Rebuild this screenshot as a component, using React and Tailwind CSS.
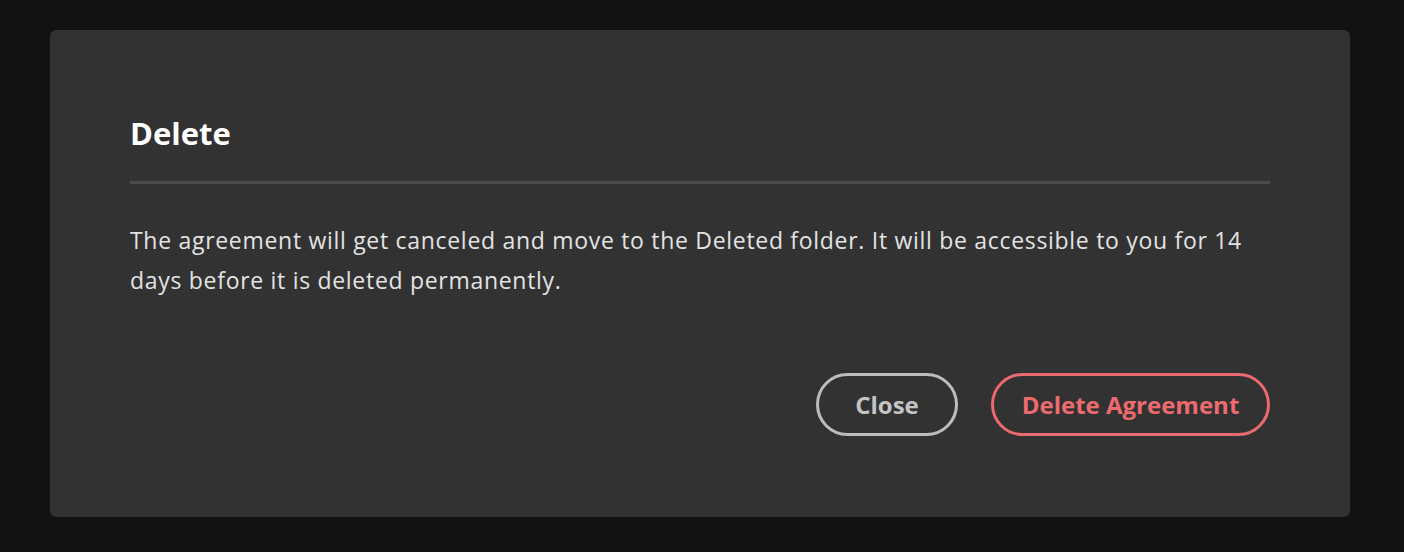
import React from "react";

// Delete confirmation dialog on a dark backdrop

const App = () => {
  return (
    <div className="min-h-screen w-full bg-[#121212] pt-[30px] pl-[50px]" style={{ fontFamily: "'Open Sans', 'Noto Sans', sans-serif" }}>
      <div className="w-[1300px] h-[487px] bg-[#323232] rounded-[6px] px-[80px] pt-[83px]">
        <h2 className="text-[31px] leading-[40px] font-bold text-white">
          Delete
        </h2>
        <div className="h-[3px] bg-[#4b4b4b] mt-[28px]" />
        <p className="mt-[36px] text-[23px] leading-[40px] text-[#e3e3e3] tracking-[0.7px] whitespace-nowrap">
          The agreement will get canceled and move to the Deleted folder. It will be accessible to you for 14
          <br />
          days before it is deleted permanently.
        </p>
        <div className="flex justify-end gap-[33px] mt-[73px]">
          <button className="w-[142px] h-[63px] rounded-full border-[3px] border-[#bdbdbd] text-[#c4c4c4] text-[24px] font-bold flex items-center justify-center">
            Close
          </button>
          <button className="w-[279px] h-[63px] rounded-full border-[3px] border-[#ea6a70] text-[#ed6b6f] text-[24px] font-bold flex items-center justify-center">
            Delete Agreement
          </button>
        </div>
      </div>
    </div>
  );
};

export default App;
